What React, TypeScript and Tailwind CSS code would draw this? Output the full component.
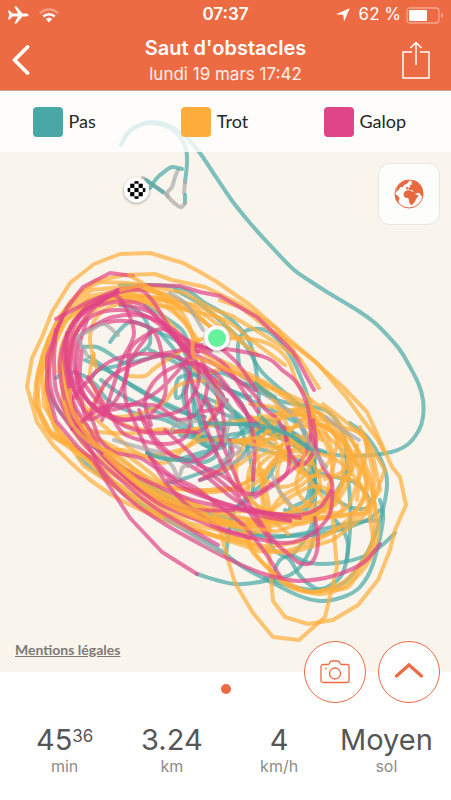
// src/App.tsx
import type { ReactNode } from "react";

type Gait = "pas" | "trot" | "galop" | "arret";

interface Track {
  gait: Gait;
  points: string;
  sharp?: boolean;
}

const gaitColors: Record<Gait, string> = {
  pas: "#49a8a5",
  trot: "#ffae3b",
  galop: "#df4587",
  arret: "#aaa9a8",
};

const legendItems = [
  { label: "Pas", swatch: "bg-[#49a8a5]" },
  { label: "Trot", swatch: "bg-[#ffae3b]" },
  { label: "Galop", swatch: "bg-[#df4587]" },
];

const stats = [
  { value: "45", sup: "36", unit: "min" },
  { value: "3.24", unit: "km" },
  { value: "4", unit: "km/h" },
  { value: "Moyen", unit: "sol" },
];

const tracks: Track[] = [
  // way in and way out
  { gait: "pas", points: "121,145 126,135 134,128 144,123 156,122 168,125 180,132 190,141 200,153 216,177 233,202 250,223 267,242 293,269 310,281 327,292 360,312 375,323 387,335 400,350 410,367 419,385 423,400 423,417 419,430 407,445 387,453 350,456 325,453 305,447 285,440 262,432 235,434 205,440" },
  { gait: "pas", points: "121,145 130,131 144,124 158,124 170,128 180,137 186,149 187,163 185,182" },
  { gait: "arret", points: "185,182 184,193" },
  { gait: "pas", points: "185,195 185,203" },
  { gait: "arret", points: "185,203 180,207 167,195 172,187 175,177 178,170" },
  { gait: "pas", points: "182,169 172,167 164,172 157,178 150,188" },
  { gait: "arret", points: "143,178 163,192 168,196" },
  { gait: "pas", points: "146,180 153,185 163,192" },

  // walk, under the faster gaits
  { gait: "pas", points: "85,360 110,372 132,385 155,398 180,410 200,420 225,430" },
  { gait: "pas", points: "90,357 120,378 150,397 178,411 205,417" },
  { gait: "pas", points: "101,380 125,397 155,411 180,422 205,440" },
  { gait: "pas", points: "83,347 97,347 110,354 125,363 146,359 165,355 185,362 210,382 235,392 250,397" },
  { gait: "pas", points: "120,305 135,309 147,323 150,343 140,353 120,365 98,370 90,382" },
  { gait: "pas", points: "110,342 118,332 130,322 146,326 160,333 178,342 188,361 192,385 194,415" },
  { gait: "pas", points: "120,285 150,285 175,287 190,292 205,303 221,312 237,325 250,343 256,370 259,400 258,440" },
  { gait: "pas", points: "56,378 65,373 80,374 96,385 110,402 140,415 165,420 190,432 220,442 250,440" },
  { gait: "pas", points: "145,305 163,316 182,330 189,347 190,370 184,393 176,397 179,378 200,374 222,373 244,384 260,392 280,401 300,405 327,411 343,433 347,467 350,500 350,530 347,560" },
  { gait: "pas", points: "239,365 238,345 243,333 253,329 267,331 280,342 293,360 303,383 310,405 316,430 314,470 310,505" },
  { gait: "pas", points: "48,388 55,405 68,421 82,438 110,458 140,480 170,500 205,516 250,533 290,536 330,532 365,521 380,510" },
  { gait: "pas", points: "78,457 100,475 125,493 150,510 180,527 218,549 243,567 267,580 297,595 320,601 343,597 360,587 373,564 383,520 380,500" },
  { gait: "pas", points: "265,578 290,586 318,590 345,582 367,553 380,520 387,485 382,462 368,438 350,423" },
  { gait: "pas", points: "197,574 235,584 270,580 290,575 303,563 313,540 315,500 314,460 304,430 282,415 260,405 230,390" },
  { gait: "pas", points: "292,555 310,563 337,563 365,556 381,546 395,533" },
  { gait: "pas", points: "147,453 165,458 185,460 205,455 215,445 230,440 255,448 282,455 305,463 325,475 350,480 365,492 370,505 360,509 345,505 320,490" },
  { gait: "pas", points: "164,484 180,480 203,472 225,462 230,445 222,430 210,410 195,390" },
  { gait: "pas", points: "240,425 248,450 253,475 251,497 236,508 230,525 226,555" },
  { gait: "pas", points: "280,448 270,475 250,495 235,508" },
  { gait: "pas", points: "335,520 343,530 348,545 344,570 335,582 318,589 300,576 290,560 274,550 268,535" },
  { gait: "pas", points: "150,350 180,365 208,386 230,410 250,430 277,448 290,460 308,473 320,490" },
  { gait: "pas", points: "200,424 230,424 260,425 290,431 310,448 310,475 307,498 290,508" },
  { gait: "pas", points: "177,431 192,435 211,447 235,438 250,425 262,427 283,438 304,452" },
  { gait: "pas", points: "245,384 262,389 283,407 300,425 307,443 315,475 310,505 297,512 285,510" },
  { gait: "pas", points: "200,480 223,472 240,458 251,440 249,421 239,400 220,381 205,369" },
  { gait: "pas", points: "184,430 210,438 225,446 200,453 180,459" },
  { gait: "pas", points: "210,378 225,400 240,418 264,431 290,440 325,452" },
  { gait: "pas", points: "180,435 208,442 216,455 200,463 178,458" },
  { gait: "pas", points: "347,467 341,484 330,500 312,520" },
  { gait: "pas", points: "203,400 222,413 250,423 268,420 284,427 298,437 308,447" },
  { gait: "pas", points: "200,395 235,412 255,430 270,428 290,441 302,452" },
  { gait: "pas", points: "175,290 200,304 225,325 245,345 262,372 290,397 311,415" },
  { gait: "pas", points: "150,484 175,498 205,513 235,520 262,537 300,534 345,524 377,520" },
  { gait: "pas", points: "270,580 280,560 295,552 310,530 315,510" },
  { gait: "pas", points: "160,333 176,352 186,375 183,397 190,420 197,440 215,450" },

  // trot laps
  { gait: "trot", sharp: true, points: "383,450 378,440 363,420 347,398 317,363 290,340 250,305 217,282 200,272 183,263 150,253 120,254 94,264 70,283 52,312 42,337 32,358 27,387 37,422 53,445 70,462 90,480 110,494 130,505 163,520 220,538 260,551 290,553 333,540 363,517 380,490 373,457 363,433" },
  { gait: "trot", sharp: true, points: "220,300 240,307 270,330 293,345 313,360 343,387 367,412 383,447 392,467 400,477 406,505 395,530 390,550 378,580 358,605 333,620 308,624 285,617 273,601 271,580 268,543 270,510 262,470" },
  { gait: "trot", sharp: true, points: "213,500 220,530 227,557 235,583 253,613 273,637 299,640 325,617 337,567 333,523 327,493 335,460 325,430 300,405 265,382 220,360" },
  { gait: "trot", sharp: true, points: "300,360 276,328 240,304 205,287 172,280 155,274 125,275 95,281 70,302 55,325 43,353 36,383 40,412 53,437 77,449 104,478 140,506 180,526 230,540 270,547 315,539 347,525 372,503 385,470 367,440 350,425 323,404" },
  { gait: "trot", sharp: true, points: "319,388 300,359 267,337 232,316 210,308 185,293 155,287 128,283 100,282 78,293 60,316 49,338 42,370 44,406 58,430 80,452 107,464 132,486 157,501 190,514 232,525 267,527 306,518 335,505 348,484 352,456 341,428" },
  { gait: "trot", sharp: true, points: "258,355 220,326 195,308 166,294 140,289 115,294 88,300 67,320 52,346 40,378 36,405 51,435 73,450 99,467 125,492 158,511 193,524 230,533 278,531 306,521 332,504" },
  { gait: "trot", points: "239,340 219,318 195,305 160,300 120,297 88,306 69,329 63,358 62,385 70,413 86,433 116,448 143,467 172,490 207,510 250,520 290,517 330,502 346,475" },
  { gait: "trot", points: "285,365 254,342 225,320 185,310 155,305 121,298 94,311 74,334 65,367 68,400 82,428 103,450 126,474 152,491 177,505 211,516 250,525 285,520" },
  { gait: "trot", points: "97,370 90,340 96,318 115,305 145,302 165,318 183,341 191,363 202,374 225,369 250,380 280,391 307,404 330,423 360,433 367,447 374,482 370,516 373,545 360,568 348,587 326,590 310,592 285,582 268,568 251,550 245,530" },
  { gait: "trot", points: "219,340 241,338 269,344 288,360 297,383 311,400 333,416 358,450 372,485 374,532 363,560 342,583 310,592 286,585 270,570" },
  { gait: "trot", points: "102,388 94,403 83,425 90,442 112,455 134,469 159,483 185,490 215,492 245,483 264,461 282,452 316,453 341,463 360,485 369,511 352,514 325,517 299,524 273,518 253,509" },
  { gait: "trot", points: "129,376 145,376 155,368 173,356 187,347 202,339" },
  { gait: "trot", points: "99,413 119,417 145,412 164,402 177,386 196,381 216,381" },
  { gait: "trot", points: "87,430 110,433 139,433 163,429 185,432 216,424 253,419 287,412 308,409 330,421 347,446 345,469 325,479" },
  { gait: "trot", points: "94,354 90,376 99,398 112,419 140,429 171,432 200,428" },
  { gait: "trot", points: "72,346 69,378 79,398 95,418 117,437 136,452 163,463 184,449 202,432 217,405 217,380" },
  { gait: "trot", points: "103,451 123,450 145,456 180,450 203,440 235,441 265,440 297,436 312,446 308,470 292,485 273,485 255,470" },
  { gait: "trot", points: "64,385 63,405 75,433 94,454 118,464 146,481 174,488 202,490 230,489 253,479 278,462 300,456" },
  { gait: "trot", points: "65,344 63,370 69,396 81,420 104,443 131,466 153,484 181,502 223,511 256,511 285,514 304,506 320,486 311,460 294,443 272,427 252,417" },
  { gait: "trot", points: "160,502 192,512 235,523 262,517 284,501 310,487 326,489 343,507 327,518 293,517 265,512 249,493 251,466 269,452 285,458" },
  { gait: "trot", points: "297,518 267,511 240,490 237,463 247,440 268,420 292,410 312,424 328,448 332,478 322,505 298,518" },
  { gait: "trot", points: "263,528 278,500 303,484 328,463 337,439 319,423 290,414 271,428 257,447 261,475 264,499 273,519 288,534" },
  { gait: "trot", points: "295,425 320,431 341,449 361,469 367,490 355,511 333,517 302,512 281,495 278,467 291,445 318,439" },
  { gait: "trot", points: "200,492 223,488 242,490 264,476 278,454 289,432 316,412 329,426 341,449 342,483 331,509" },
  { gait: "trot", points: "310,400 316,427 314,456 300,470 298,492 317,510 345,510 358,480 367,450 360,427" },
  { gait: "trot", points: "261,415 273,438 288,461 306,475 331,476 357,482 368,498" },
  { gait: "trot", points: "241,440 263,443 285,452 302,470 321,495 331,508" },
  { gait: "trot", sharp: true, points: "215,330 192,312 170,301 145,296 118,291 90,296 66,312 48,340 38,372 34,402 46,430 66,440 84,466 112,484 142,508 176,520 216,536 256,540" },
  { gait: "trot", sharp: true, points: "209,326 187,309 160,298 132,295 104,303 84,304 64,322 53,350 47,380 48,408 58,437 84,455 108,478 140,498 172,514 212,522 250,528" },
  { gait: "trot", sharp: true, points: "205,322 183,302 152,291 121,287 92,290 72,303 57,331 48,362 45,392 53,422 68,444 96,463 126,482 160,505 200,517 240,524 282,520" },
  { gait: "trot", points: "130,470 158,491 190,503 228,514 262,520 300,508 330,497 352,470 357,445" },
  { gait: "trot", points: "250,404 278,408 310,416 340,427 356,448 366,472 375,505 378,535 366,566 343,587 318,594 290,584 262,562 248,540" },
  { gait: "trot", points: "212,526 240,540 276,551 305,545 335,530 358,508 366,480 352,452 330,430 300,420" },
  { gait: "trot", points: "265,515 262,490 272,462 300,445 318,425 340,440 358,468 357,500" },
  { gait: "trot", points: "208,474 240,464 268,440 290,428 322,425 343,440 352,470" },
  { gait: "trot", points: "58,372 62,345 76,318 98,300 128,296 160,304 184,322 203,352 232,370 266,385 300,410 322,440" },

  // canter laps
  { gait: "galop", sharp: true, points: "133,276 110,273 83,287 67,308 57,329 47,357 47,389 56,421 78,447 93,460 110,487 130,518 162,552 197,574" },
  { gait: "galop", sharp: true, points: "56,319 88,302 117,290 147,285 180,286 200,292 220,296 257,317 275,334 293,352 303,370 314,390" },
  { gait: "galop", points: "119,290 100,302 82,312 67,335 60,362 64,396 76,423 91,450 104,473 130,500 163,523 200,544 237,563 264,574 280,578 300,581 333,576 363,563 380,544" },
  { gait: "galop", points: "99,305 123,301 144,306 160,321 180,341 200,347 233,350 267,358 282,370 297,383 308,408 312,437 323,467 332,483 330,513 317,530 300,540 283,543 250,537 220,527 193,510 167,484 150,456 138,430 125,397 127,370 137,350 151,332" },
  { gait: "galop", points: "190,355 170,333 146,316 120,310 94,315 76,333 69,359 70,393 79,424 98,447 127,471 160,487 192,500 235,509 276,514 300,515 320,507 331,491" },
  { gait: "galop", points: "77,398 67,368 70,337 84,312 115,294 139,290 152,300 166,322 184,350 209,375 242,405 254,440 253,480" },
  { gait: "galop", points: "207,400 215,420 220,437 231,465 243,493 259,520 273,540 287,553 300,563 312,562 318,543 315,518" },
  { gait: "galop", points: "151,414 165,395 163,360 155,333 137,323 115,321 90,328 77,342 75,370 85,398 107,410 136,403 158,391 177,372 191,356 206,360 225,371 250,390 265,409 278,420 288,444 288,470 278,482 255,497" },
  { gait: "galop", points: "73,398 95,373 113,360 139,354 161,354 181,350 202,345" },
  { gait: "galop", points: "90,415 107,381 132,365 166,355 191,364 210,381 223,396 219,408 204,411" },
  { gait: "galop", points: "151,425 145,402 153,383 168,370 190,363 214,372 229,389 240,406 259,427" },
  { gait: "galop", points: "72,429 102,408 125,405 157,406 179,420 200,410 208,380 202,360" },
  { gait: "galop", points: "67,333 67,365 80,395 88,419 112,405 126,378 130,350 143,337 162,329 185,339 211,351" },
  { gait: "galop", points: "87,320 78,351 78,383 95,408 121,419 144,420 154,437 172,455 202,473 231,497 250,508 290,520" },
  { gait: "galop", points: "139,410 147,429 162,450 190,461 208,455 222,440 223,415 212,382 200,364" },
  { gait: "galop", points: "75,371 94,397 121,424 153,433 183,431 202,430 227,400" },
  { gait: "galop", points: "150,457 170,475 194,487 218,505 243,525 264,551 280,576" },
  { gait: "galop", points: "165,430 187,450 205,469 234,493 255,520 270,540" },
  { gait: "galop", points: "56,330 54,362 56,390 67,414 88,440 110,463 138,487 168,503 195,510 233,510" },
  { gait: "galop", points: "63,315 54,340 49,370 54,400 68,423 94,455 121,480 151,505 185,526 218,545" },
  { gait: "galop", points: "76,320 88,305 107,296 121,300 134,333 121,362 110,397 102,420" },
  { gait: "galop", points: "92,327 113,317 144,316 174,330 198,352" },
  { gait: "galop", points: "88,377 101,399 113,419 126,435 161,444 184,438 190,420 186,394 190,373" },
  { gait: "galop", points: "198,465 223,476 249,494 272,484 301,461 311,435" },
  { gait: "galop", points: "200,480 218,471 232,456 230,440" },
  { gait: "galop", points: "285,427 288,448 301,465 315,448 313,420" },
  { gait: "galop", points: "118,291 96,305 74,322 64,350 68,384 76,408 90,430 104,455 126,478 156,502 190,517 222,530 250,538" },
  { gait: "galop", points: "104,298 85,318 73,342 71,374 79,402 92,420 100,440 114,452 140,458 165,474 196,492 230,506 262,512 300,518" },
  { gait: "galop", points: "120,304 150,312 172,332 188,350 205,352 226,366 244,392 258,412" },
  { gait: "galop", points: "82,350 80,382 92,406 116,420 138,418 160,416 184,408 198,384 196,360 184,345" },

  // short halts
  { gait: "arret", points: "88,357 80,342 79,336 91,330 104,324 118,335" },
  { gait: "arret", points: "170,293 187,305 203,330" },
  { gait: "arret", points: "114,440 145,449 160,453 173,467 178,478 183,467 190,466" },
  { gait: "arret", points: "171,431 179,423 200,421" },
  { gait: "arret", points: "202,375 215,390 231,410 230,420 226,440 240,450 220,462" },
  { gait: "arret", points: "240,375 263,393 284,407 299,421 309,443 326,467" },
  { gait: "arret", points: "165,519 185,530 205,544 222,553" },
  { gait: "arret", points: "272,475 279,490 290,504" },
  { gait: "arret", points: "225,466 240,459 258,447" },
  { gait: "arret", points: "326,417 343,430 359,440" },

  // last passes, on top
  { gait: "trot", points: "121,290 140,286 160,293 180,310 192,333 193,355 203,360 226,369 250,380 269,393 285,421 292,439" },
  { gait: "trot", points: "129,275 145,285 165,301 181,318 199,341" },
  { gait: "trot", points: "70,390 72,410 89,437 114,460 142,485 169,501 207,520" },
  { gait: "trot", points: "121,468 149,492 179,504 206,514" },
  { gait: "trot", points: "105,455 130,478 160,500 195,517 235,527 270,530" },
  { gait: "trot", points: "64,402 72,424 92,444 110,452 116,456" },
  { gait: "trot", points: "235,442 258,445 276,448 298,440 304,452 300,472" },
  { gait: "trot", points: "233,441 262,436 275,420 300,414" },
  { gait: "pas", points: "194,400 198,414 202,428 213,440" },
  { gait: "pas", points: "255,383 266,392 275,397" },
  { gait: "pas", points: "147,453 165,459 190,460" },
  { gait: "pas", points: "202,423 235,424 262,426 284,432 300,442 312,450" },
  { gait: "pas", points: "262,418 276,430 292,436 306,446" },
  { gait: "galop", points: "185,365 197,395 207,430 223,466 240,495" },
  { gait: "galop", points: "217,345 238,364 256,390" },
  { gait: "galop", points: "168,480 196,494 236,507 262,516 290,521" },
];

// Catmull-Rom through every GPS point
const trackPath = (points: string, sharp?: boolean) => {
  const pts = points.split(" ").map((p) => p.split(",").map(Number));
  let d = `M${pts[0][0]} ${pts[0][1]}`;
  for (let i = 0; i < pts.length - 1; i++) {
    const p1 = pts[i];
    const p2 = pts[i + 1];
    if (sharp) {
      d += `L${p2[0]} ${p2[1]}`;
      continue;
    }
    const p0 = pts[i - 1] ?? p1;
    const p3 = pts[i + 2] ?? p2;
    d += `C${p1[0] + (p2[0] - p0[0]) / 6} ${p1[1] + (p2[1] - p0[1]) / 6} ${
      p2[0] - (p3[0] - p1[0]) / 6
    } ${p2[1] - (p3[1] - p1[1]) / 6} ${p2[0]} ${p2[1]}`;
  }
  return d;
};

const RideMap = () => (
  <svg
    viewBox="0 91 451 581"
    preserveAspectRatio="xMidYMid slice"
    className="absolute inset-0 h-full w-full"
    role="img"
    aria-label="Parcours"
  >
    <defs>
      <filter id="pinShadow" x="-50%" y="-50%" width="200%" height="200%">
        <feDropShadow dx="0" dy="1" stdDeviation="1.5" floodOpacity="0.4" />
      </filter>
      <clipPath id="flagClip">
        <circle cx="136.500" cy="190" r="9" />
      </clipPath>
    </defs>
    <g fill="none" strokeWidth="4" strokeLinejoin="round" strokeLinecap="round" strokeOpacity="0.7">
      {tracks.map((track, index) => (
        <path key={index} d={trackPath(track.points, track.sharp)} stroke={gaitColors[track.gait]} />
      ))}
    </g>
    <circle cx="136.500" cy="190" r="12.500" fill="#fff" filter="url(#pinShadow)" />
    <g clipPath="url(#flagClip)">
      {[0, 1, 2, 3, 4].map((row) =>
        [0, 1, 2, 3, 4].map((col) =>
          (row + col) % 2 === 0 ? (
            <rect key={`${row}-${col}`} x={126 + col * 4.2} y={179.5 + row * 4.2} width="4.2" height="4.2" />
          ) : null
        )
      )}
    </g>
    <circle cx="217" cy="338" r="12.500" fill="#fff" filter="url(#pinShadow)" />
    <circle cx="217" cy="338" r="9" fill="#66f29c" />
  </svg>
);

const StatusBar = () => (
  <div className="grid h-[30px] grid-cols-3 items-center px-2">
    <div className="flex items-center gap-2.5">
      <svg viewBox="0 0 21 18" className="h-[18px] w-[21px]" fill="#fff">
        <path d="M0 4.500h1.500L4.500 7.500h5.500L6.300.5h2.200L14.500 7.500h3.500c1.500 0 2.500.7 2.500 1.500s-1 1.500-2.500 1.500h-3.500l-6 7H6.300l3.700-7H4.500l-3 3H0L1.300 9z" />
      </svg>
      <svg viewBox="0 0 20 15" className="h-[15px] w-5" fill="none" stroke="#fff" strokeWidth="2.600">
        <path d="M1 5.300a12.500 12.500 0 0 1 18 0" strokeOpacity="0.35" />
        <path d="M4.300 8.700a8 8 0 0 1 11.400 0" />
        <path d="M10 14.400l-3.200-3.300a4.500 4.500 0 0 1 6.400 0z" fill="#fff" stroke="none" />
      </svg>
    </div>
    <span className="text-center text-[17px] font-semibold">07:37</span>
    <div className="flex items-center justify-end gap-[5px]">
      <svg viewBox="0 0 14 14" className="mr-1 h-3.5 w-3.5 shrink-0" fill="#fff">
        <path d="M13.800.2L8 13.500 7.300 6.700 0 6.200z" />
      </svg>
      <span className="text-[17px] whitespace-nowrap">62 %</span>
      <svg viewBox="0 0 37 17" className="h-[17px] w-[37px] shrink-0" fill="none">
        <rect x="1" y="1" width="32" height="15" rx="3" stroke="#fff" strokeOpacity="0.4" strokeWidth="1.300" />
        <rect x="3" y="3" width="18" height="11" rx="1" fill="#fff" />
        <path d="M35 6v5c1.300-.4 2-1.300 2-2.500S36.300 6.400 35 6z" fill="#fff" fillOpacity="0.4" />
      </svg>
    </div>
  </div>
);

const Header = () => (
  <header className="border-b border-[#c9a79c] bg-[#ed6b43] text-white">
    <StatusBar />
    <div className="flex h-15 items-center justify-between pr-5 pl-3">
      <button type="button" aria-label="Retour" className="w-[30px]">
        <svg viewBox="0 0 18 30" className="h-[30px] w-[18px]" fill="none" stroke="#fff" strokeWidth="3.800" strokeLinecap="round" strokeLinejoin="round">
          <path d="M15.500 2L2.500 15l13 13" />
        </svg>
      </button>
      <div className="pl-2 text-center">
        <h1 className="text-[20px] leading-7 font-semibold">Saut d'obstacles</h1>
        <p className="text-[17px] leading-6 text-white/90">lundi 19 mars 17:42</p>
      </div>
      <button type="button" aria-label="Partager" className="w-[30px]">
        <svg viewBox="0 0 30 39" className="h-[39px] w-[30px]" fill="none" stroke="#fff" strokeWidth="1.500">
          <path d="M11 11H2v26h26V11h-9M15 24V2M9.500 7L15 1.500 20.500 7" />
        </svg>
      </button>
    </div>
  </header>
);

const Legend = () => (
  <ul className="absolute inset-x-0 top-0 grid h-[61px] grid-cols-3 bg-white/80 font-[Lato,sans-serif] text-[18px] text-[#262626]">
    {legendItems.map((item) => (
      <li key={item.label} className="flex items-center justify-center gap-1.5 pr-[22px]">
        <span className={`h-[30px] w-[30px] rounded ${item.swatch}`} />
        {item.label}
      </li>
    ))}
  </ul>
);

const RoundButton = ({ label, children }: { label: string; children: ReactNode }) => (
  <button
    type="button"
    aria-label={label}
    className="flex h-[62px] w-[62px] items-center justify-center rounded-full border border-[#ed6b43] bg-white text-[#ed6b43]"
  >
    {children}
  </button>
);

const App = () => {
  return (
    <div className="flex min-h-screen flex-col bg-white font-[Inter,sans-serif]">
      <Header />

      <main className="relative min-h-[480px] flex-1 bg-[#f9f4ec]">
        <RideMap />
        <Legend />
        <button
          type="button"
          aria-label="Type de carte"
          className="absolute top-[72px] right-[11px] flex h-[62px] w-[62px] items-center justify-center rounded-xl border border-[#e9e6e2] bg-[#fdfdfc]"
        >
          <svg viewBox="0 0 90 90" className="h-[30px] w-[30px]" fill="#e86840">
            <circle cx="45" cy="45" r="42" fill="#fff" stroke="#e86840" strokeWidth="3" />
            <path d="M29 43l5-7 10-3 8 4 10 1 4 9 8 2-8 12-4 8-8 9-6-2-3-10-2-9-9-1-5-5z" />
            <path d="M53 8l6-4c10 2 19 10 24 19 4 8 5 18 3 28l-5-1-5-8-6-1-4 3-6-6-4-4-10-1-3-5 6-4-2-5 8-3-3-4z" />
            <path d="M36 29l2-6 6 2-1 5-6 2z" />
            <path d="M23 10c8-5 15-7 22-7l-1 6-7 7-7 2-3 6-8 1-5 8-8 6c1-12 7-23 17-29z" />
            <path d="M3 46l7 3 7 9-3 7 1 10C8 68 3 58 3 46z" />
          </svg>
        </button>
        <a href="#mentions" className="absolute bottom-3 left-[15px] font-[Lato,sans-serif] text-[14px] font-bold text-[#7d7a76] underline">
          Mentions légales
        </a>
        <div className="absolute right-[11px] -bottom-[31px] flex gap-3">
          <RoundButton label="Prendre une photo">
            <svg viewBox="0 0 30 24" className="h-6 w-[30px]" fill="none" stroke="currentColor" strokeWidth="1.300">
              <path d="M3 4.500h5.500c1 0 1.300-3.500 3-3.500h6.500c1.700 0 2 3.500 3 3.500h6a2 2 0 0 1 2 2v14a2 2 0 0 1-2 2H3a2 2 0 0 1-2-2v-14a2 2 0 0 1 2-2z" />
              <circle cx="15" cy="13.500" r="5.500" />
              <path d="M6 7.500v2" />
            </svg>
          </RoundButton>
          <RoundButton label="Afficher les détails">
            <svg viewBox="0 0 30 16" className="mb-1 h-4 w-[30px]" fill="none" stroke="currentColor" strokeWidth="3.200" strokeLinecap="round">
              <path d="M2.500 14L15 3l12.500 11" />
            </svg>
          </RoundButton>
        </div>
      </main>

      <footer className="flex h-32 flex-col px-[11px] pt-3">
        <span className="mx-auto h-2.5 w-2.5 rounded-full bg-[#ed6b43]" />
        <dl className="mt-[30px] grid grid-cols-4 text-center">
          {stats.map((stat) => (
            <div key={stat.unit} className="flex flex-col-reverse">
              <dt className="text-[16px] leading-5 text-[#8c8c8c]">{stat.unit}</dt>
              <dd className="flex justify-center text-[29px] leading-8 text-[#565656]">
                {stat.value}
                {stat.sup && <sup className="top-0 pt-1 text-[17px] leading-4">{stat.sup}</sup>}
              </dd>
            </div>
          ))}
        </dl>
      </footer>
    </div>
  );
};

export default App;
